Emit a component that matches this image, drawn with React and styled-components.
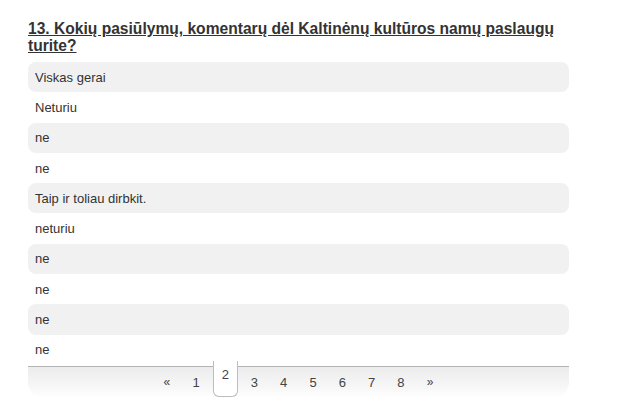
import React from "react";
import styled, { createGlobalStyle } from "styled-components";

const GlobalStyle = createGlobalStyle`
  body {
    margin: 0;
    background: #fff;
    font-family: "Liberation Sans", Arial, sans-serif;
    color: #333;
  }
`;

const answers = [
  "Viskas gerai",
  "Neturiu",
  "ne",
  "ne",
  "Taip ir toliau dirbkit.",
  "neturiu",
  "ne",
  "ne",
  "ne",
  "ne",
];

const pages = ["«", "1", "2", "3", "4", "5", "6", "7", "8", "»"];

const App = () => {
  return (
    <>
      <GlobalStyle />
      <Wrapper>
        <Question>
          13. Kokių pasiūlymų, komentarų dėl Kaltinėnų kultūros namų paslaugų
          turite?
        </Question>
        <AnswerList>
          {answers.map((text, i) => (
            <Answer key={i} $striped={i % 2 === 0}>
              {text}
            </Answer>
          ))}
        </AnswerList>
        <Pager>
          {pages.map((p) => (
            <PageItem key={p} $active={p === "2"} $arrow={p === "«" || p === "»"}>
              {p}
            </PageItem>
          ))}
        </Pager>
      </Wrapper>
    </>
  );
};

const Wrapper = styled.div`
  width: 541px;
  padding: 20px 0 0 28px;
`;

const Question = styled.h2`
  margin: 0 0 8px 0;
  font-size: 15.6px;
  line-height: 17px;
  font-weight: bold;
  color: #333;
  text-decoration: underline;
`;

const AnswerList = styled.div`
  display: flex;
  flex-direction: column;
`;

const Answer = styled.div`
  height: 30.3px;
  display: flex;
  align-items: center;
  padding-left: 7px;
  font-size: 13px;
  color: #333;
  border-radius: 8px;
  background: ${(p) => (p.$striped ? "#f1f1f1" : "transparent")};
`;

const Pager = styled.div`
  display: flex;
  justify-content: center;
  align-items: flex-start;
  height: 31px;
  margin-top: 1px;
  border-top: 1px solid #b4b4b4;
  border-radius: 0 0 16px 16px;
  background: linear-gradient(to bottom, #ececec 0%, #f6f6f6 60%, #fff 100%);
`;

const PageItem = styled.span`
  width: ${(p) => (p.$active ? "25px" : "29.3px")};
  margin: ${(p) => (p.$active ? "-6px 2px 0 2px" : "0")};
  height: ${(p) => (p.$active ? "36px" : "30px")};
  display: flex;
  justify-content: center;
  align-items: ${(p) => (p.$active ? "flex-start" : "center")};
  padding-top: ${(p) => (p.$active ? "6px" : "1px")};
  box-sizing: border-box;
  font-size: ${(p) => (p.$arrow ? "12px" : "13px")};
  color: #444;
  background: ${(p) => (p.$active ? "#fff" : "transparent")};
  border: ${(p) => (p.$active ? "1px solid #bdbdbd" : "none")};
  border-top: none;
  border-radius: 0 0 6px 6px;
`;

export default App;
